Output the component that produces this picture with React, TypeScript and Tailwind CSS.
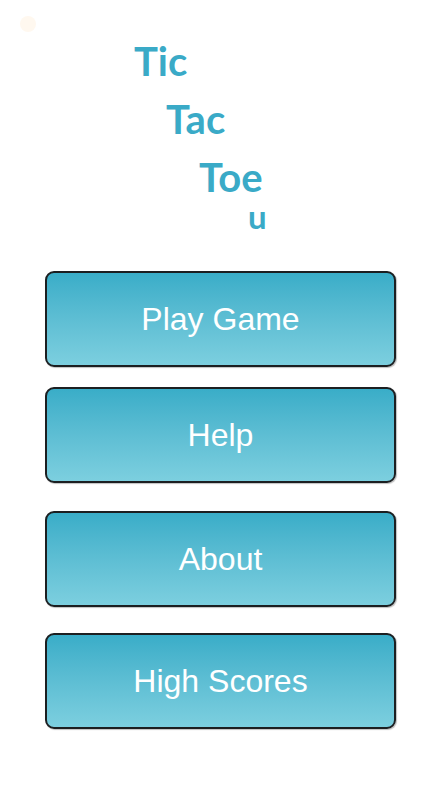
const menuItems = [
	{ label: 'Play Game', spacing: '' },
	{ label: 'Help', spacing: 'mt-5' },
	{ label: 'About', spacing: 'mt-7' },
	{ label: 'High Scores', spacing: 'mt-[26px]' },
];

const MenuButton = ({ label, className }: { label: string; className?: string }) => {
	return (
		<button
			className={`flex h-[96px] w-full items-center justify-center rounded-[9px] border-2 border-[#1c1f21] bg-gradient-to-b from-[#39adc8] to-[#7ccfdf] text-[32px] text-white shadow-[1px_1px_1px_rgba(0,0,0,0.25)] ${className ?? ''}`}
			style={{ fontFamily: '"Liberation Sans", Arial, sans-serif' }}
			type="button"
		>
			{label}
		</button>
	);
};

const App = () => {
	return (
		<div className="relative min-h-[787px] w-[442px] overflow-hidden bg-white">
			{/* faint dot in the corner */}
			<div className="absolute left-[20px] top-[16px] h-4 w-4 rounded-full bg-[#fff8ef]" />

			<div
				className="flex flex-col pt-[32px] text-[40px] font-bold leading-[58px] text-[#3aaac7]"
				style={{ fontFamily: 'Lato, sans-serif' }}
			>
				<span className="ml-[134px]">Tic</span>
				<span className="ml-[166px]">Tac</span>
				<span className="ml-[199px]">Toe</span>
				<span className="ml-[248px] mt-[-2px] text-[33px] leading-[24px]">u</span>
			</div>

			<div className="mt-[43px] flex flex-col px-[45px] pr-[46px]">
				{menuItems.map((item) => (
					<MenuButton className={item.spacing} key={item.label} label={item.label} />
				))}
			</div>
		</div>
	);
};

export default App;
